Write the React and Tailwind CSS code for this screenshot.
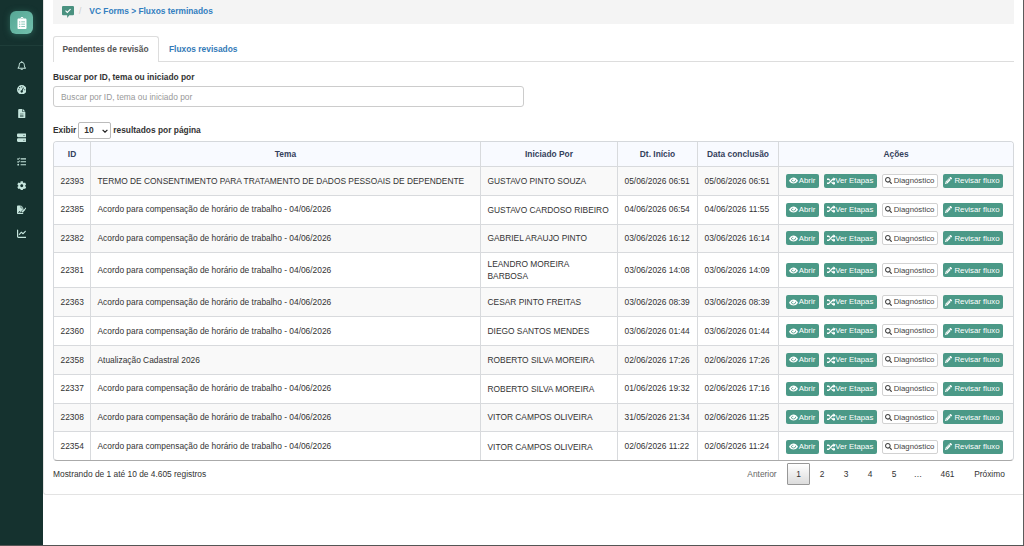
import React, { useState } from 'react';
import { FaRegBell, FaTasks, FaCog, FaRandom, FaSearch, FaPencilAlt, FaClipboardList } from 'react-icons/fa';
import { FaGaugeHigh, FaFileSignature, FaChartLine, FaServer, FaFileLines } from 'react-icons/fa6';

const menu = [FaRegBell, FaGaugeHigh, FaFileLines, FaServer, FaTasks, FaCog, FaFileSignature, FaChartLine];

const acordo = "Acordo para compensação de horário de trabalho - 04/06/2026";

const rows = [
  { id: 22393, tema: "TERMO DE CONSENTIMENTO PARA TRATAMENTO DE DADOS PESSOAIS DE DEPENDENTE", nome: "GUSTAVO PINTO SOUZA", inicio: "05/06/2026 06:51", fim: "05/06/2026 06:51" },
  { id: 22385, tema: acordo, nome: "GUSTAVO CARDOSO RIBEIRO", inicio: "04/06/2026 06:54", fim: "04/06/2026 11:55" },
  { id: 22382, tema: acordo, nome: "GABRIEL ARAUJO PINTO", inicio: "03/06/2026 16:12", fim: "03/06/2026 16:14" },
  { id: 22381, tema: acordo, nome: "LEANDRO MOREIRA BARBOSA", inicio: "03/06/2026 14:08", fim: "03/06/2026 14:09", tall: true },
  { id: 22363, tema: acordo, nome: "CESAR PINTO FREITAS", inicio: "03/06/2026 08:39", fim: "03/06/2026 08:39" },
  { id: 22360, tema: acordo, nome: "DIEGO SANTOS MENDES", inicio: "03/06/2026 01:44", fim: "03/06/2026 01:44" },
  { id: 22358, tema: "Atualização Cadastral 2026", nome: "ROBERTO SILVA MOREIRA", inicio: "02/06/2026 17:26", fim: "02/06/2026 17:26" },
  { id: 22337, tema: acordo, nome: "ROBERTO SILVA MOREIRA", inicio: "01/06/2026 19:32", fim: "02/06/2026 17:16" },
  { id: 22308, tema: acordo, nome: "VITOR CAMPOS OLIVEIRA", inicio: "31/05/2026 21:34", fim: "02/06/2026 11:25" },
  { id: 22354, tema: acordo, nome: "VITOR CAMPOS OLIVEIRA", inicio: "02/06/2026 11:22", fim: "02/06/2026 11:24" }
];

const columns = [
  { label: "ID", width: "w-[37px]" },
  { label: "Tema", width: "w-[390px]" },
  { label: "Iniciado Por", width: "w-[137px]" },
  { label: "Dt. Início", width: "w-[80px]" },
  { label: "Data conclusão", width: "w-[81px]" },
  { label: "Ações", width: "w-[234px]" }
];

function Sidebar() {
  return (
    <aside className="w-[43px] shrink-0 bg-[#15322f] flex flex-col items-center">
      <div className="w-full h-[46px] shrink-0 border-b border-[#1e3d39] flex justify-center items-center">
        <div className="size-[23px] rounded-[6px] bg-linear-to-br from-[#56a795] to-[#72c0ad] shadow-[0_1px_6px_#2c6358] flex justify-center items-center text-white">
          <FaClipboardList size={12} />
        </div>
      </div>
      <nav className="flex flex-col items-center pt-[7.5px] text-[#c5e5dd]">
        {menu.map((Icon, i) => (
          <a key={i} className="h-6 flex items-center">
            <Icon size={9.5} />
          </a>
        ))}
      </nav>
    </aside>
  );
}

function Breadcrumb() {
  return (
    <div className="h-6 bg-[#f4f4f4] pl-[9px] pb-[2px] flex items-center font-bold">
      <svg viewBox="0 0 22 22" className="size-[12px] mt-[1px]">
        <path d="M2 0h18a2 2 0 0 1 2 2v13a2 2 0 0 1-2 2h-6.500l-4 5v-5H2a2 2 0 0 1-2-2V2a2 2 0 0 1 2-2z" fill="#4a9180" />
        <path d="M6.500 8.500l3.200 3.200 6-6" fill="none" stroke="#fff" strokeWidth="2" />
      </svg>
      <span className="text-[#ccc] font-normal ml-[5px] mr-[8px]">/</span>
      <a className="text-[#337fc0]">VC Forms &gt; Fluxos terminados</a>
    </div>
  );
}

function EyeIcon() {
  return (
    <svg viewBox="0 0 18 14" className="w-[9px] h-[7px]">
      <path d="M0 7.500C2.500 3 5.500 1 9 1s6.500 2 9 6.500C15.500 11.500 12.500 13 9 13s-6.500-1.500-9-5.500z" fill="#fff" />
      <path d="M4.500 5.500a4.500 4.500 0 0 0 9 0" fill="none" stroke="#4b9987" strokeWidth="1.600" />
      <circle cx="7.500" cy="4.500" r="1.200" fill="#4b9987" />
    </svg>
  );
}

function Actions() {
  const green = "h-[14px] bg-[#4b9987] text-white rounded-[2px] flex items-center justify-center";
  return (
    <div className="flex items-center gap-[5px] text-[7.8px] whitespace-nowrap">
      <button className={`${green} w-[33px] gap-[1px]`}><EyeIcon />Abrir</button>
      <button className={`${green} w-[53px]`}><FaRandom size={8.500} />Ver Etapas</button>
      <button className="h-[14px] w-[56px] bg-white border border-[#d2d2d2] rounded-[2px] flex items-center justify-center gap-[2px] text-[#444]">
        <FaSearch size={7} />Diagnóstico
      </button>
      <button className={`${green} w-[60px] gap-[2px]`}><FaPencilAlt size={7} />Revisar fluxo</button>
    </div>
  );
}

export default function App() {
  const [tab, setTab] = useState("pendentes");
  const [page, setPage] = useState("1");
  const [busca, setBusca] = useState("");

  return (
    <div className="h-[546px] overflow-hidden flex bg-white font-['Liberation_Sans',Arial,sans-serif] text-[8.4px] text-[#333] border-b border-b-[#555]">
      <Sidebar />
      <main className="flex-1 min-w-0 border-r border-[#5b5b5b]">
        <div className="h-[495px] border-b border-l border-[#e3e3e3] rounded-bl-[3px]">
          <div className="ml-[9px] mr-[9px]">
            <Breadcrumb />
            <div className="mt-3 h-[26px] border-b border-[#ddd] flex font-bold">
              <button
                onClick={() => setTab("pendentes")}
                className="h-[26px] w-[106px] border border-b-0 border-[#ddd] rounded-t-[3px] bg-white text-[#555] pr-px"
              >
                Pendentes de revisão
              </button>
              <button onClick={() => setTab("revisados")} className="ml-[10px] pt-px text-[#337ab7]">
                Fluxos revisados
              </button>
            </div>

            {/* search */}

            <label className="block mt-[8px] h-[16px] leading-[14px] font-bold">Buscar por ID, tema ou iniciado por</label>
            <input
              type="text"
              value={busca}
              onChange={(e) => setBusca(e.target.value)}
              placeholder="Buscar por ID, tema ou iniciado por"
              className="block w-[471px] h-[21px] border border-[#ccc] rounded-[3px] px-[7px] placeholder:text-[#999]"
            />

            <div className="mt-[14px] h-[18px] flex items-center font-bold">
              Exibir
              <div className="relative ml-[2px] mr-[2px]">
                <select defaultValue="10" className="appearance-none block w-[33px] h-[17px] border border-[#bbb] rounded-[2px] bg-white pl-[5px] font-bold">
                  <option>10</option>
                  <option>25</option>
                  <option>50</option>
                </select>
                <svg viewBox="0 0 10 6" className="absolute right-[3px] top-[7px] w-[6px] h-[4px]">
                  <path d="M1 1l4 4 4-4" fill="none" stroke="#222" strokeWidth="2" />
                </svg>
              </div>
              resultados por página
            </div>

            {/* results */}

            <div className="mt-[2px] w-[961px] h-[320px] rounded-[4px] border border-[#d5d8dc] border-b-[#aaa] overflow-hidden">
              <table className="w-[959px] table-fixed border-separate border-spacing-0">
                <thead>
                  <tr className="h-[25px] bg-[#f8faff] text-[#34415c]">
                    {columns.map((col) => (
                      <th key={col.label} className={`${col.width} p-0 border-r border-b border-[#d8dadd] last:border-r-0`}>{col.label}</th>
                    ))}
                  </tr>
                </thead>
                <tbody>
                  {rows.map((row) => (
                    <tr
                      key={row.id}
                      className={`${row.tall ? "h-[35px]" : "h-[28.800px]"} odd:bg-[#f9f9f9] *:p-0 *:pl-[6.500px] *:border-r *:border-b *:border-[#d8dadd] *:last:border-r-0 last:*:border-b-0`}
                    >
                      <td>{row.id}</td>
                      <td className="whitespace-nowrap">{row.tema}</td>
                      <td className="leading-3"><div className={row.tall ? "w-[100px]" : "whitespace-nowrap"}>{row.nome}</div></td>
                      <td className="whitespace-nowrap">{row.inicio}</td>
                      <td className="whitespace-nowrap">{row.fim}</td>
                      <td><Actions /></td>
                    </tr>
                  ))}
                </tbody>
              </table>
            </div>

            {/* pagination */}

            <div className="flex justify-between">
              <span className="mt-[7px]">Mostrando de 1 até 10 de 4.605 registros</span>
              <div className="mt-[2px] h-[22px] flex items-center">
                <button className="w-[36px] text-[#666] mr-[7px]">Anterior</button>
                <button className="h-[22px] w-[23px] border border-[#979797] rounded-[1px] bg-linear-to-b from-white to-[#dcdcdc]" onClick={() => setPage("1")}>1</button>
                {["2", "3", "4", "5", "…"].map((p) => (
                  <button key={p} onClick={() => setPage(p)} className="w-6">{p}</button>
                ))}
                <button className="w-[35px]" onClick={() => setPage("461")}>461</button>
                <button className="w-[49px]">Próximo</button>
              </div>
            </div>
          </div>
        </div>
      </main>
    </div>
  );
}
